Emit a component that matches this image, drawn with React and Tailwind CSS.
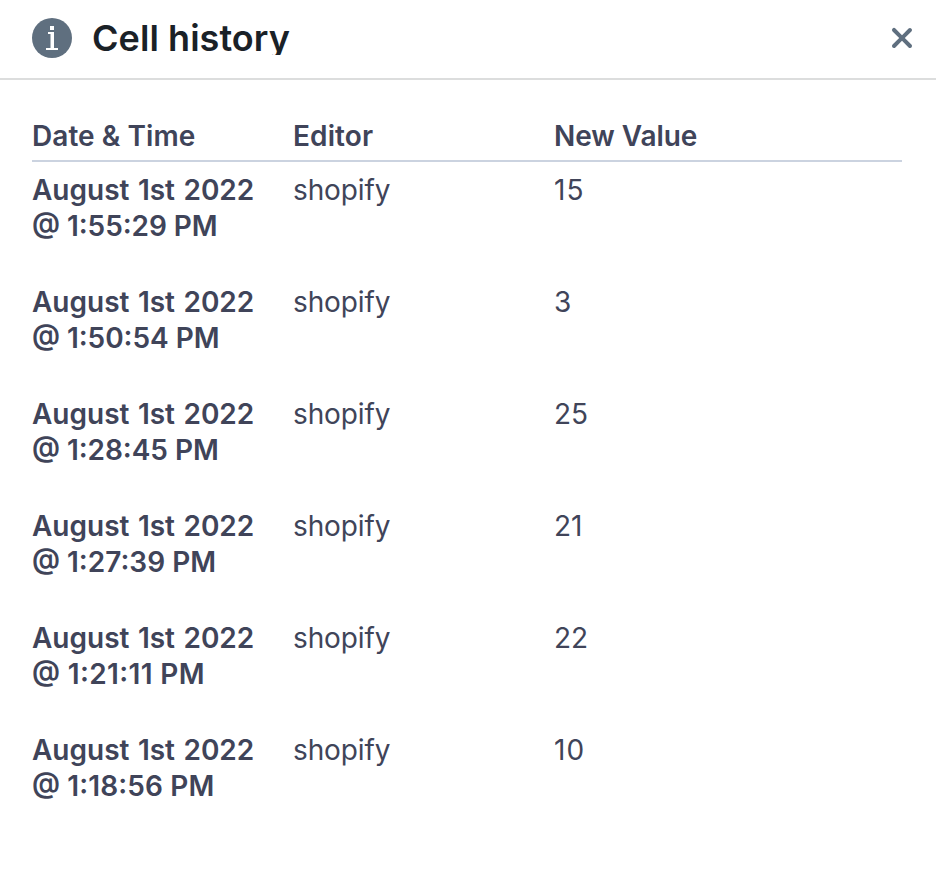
const history = [
  { date: "August 1st 2022", time: "1:55:29 PM", editor: "shopify", value: "15", tracking: "tracking-[-0.05px]" },
  { date: "August 1st 2022", time: "1:50:54 PM", editor: "shopify", value: "3", tracking: "tracking-[-0.05px]" },
  { date: "August 1st 2022", time: "1:28:45 PM", editor: "shopify", value: "25", tracking: "tracking-[-0.05px]" },
  { date: "August 1st 2022", time: "1:27:39 PM", editor: "shopify", value: "21", tracking: "tracking-normal" },
  { date: "August 1st 2022", time: "1:21:11 PM", editor: "shopify", value: "22", tracking: "tracking-[0.35px]" },
  { date: "August 1st 2022", time: "1:18:56 PM", editor: "shopify", value: "10", tracking: "tracking-[0.12px]" },
];

function InfoIcon() {
  return (
    <svg className="h-10 w-10 shrink-0" viewBox="0 0 40 40" aria-hidden="true">
      <circle cx="20" cy="20" r="20" fill="#5f6f7f" />
      <path fill="#fff" d="M18 8h4v4h-4zM16 14h6v16h4v2H14v-2h4.5V16H16z" />
    </svg>
  );
}

function CloseIcon() {
  return (
    <svg className="h-10 w-10" viewBox="0 0 20 20" aria-hidden="true">
      <path
        fill="#5f6f7f"
        d="M11.41 10l3.29-3.29c.19-.18.3-.43.3-.71a1.003 1.003 0 00-1.71-.71L10 8.59l-3.29-3.3a1.003 1.003 0 00-1.42 1.42L8.59 10 5.3 13.29c-.19.18-.3.43-.3.71a1.003 1.003 0 001.71.71l3.29-3.3 3.29 3.29c.18.19.43.3.71.3a1.003 1.003 0 00.71-1.71L11.41 10z"
      />
    </svg>
  );
}

export default function App() {
  return (
    <div className="min-h-screen bg-white font-['Inter',sans-serif] text-[28px] leading-9 text-[#404459]">
      <header className="flex h-20 items-center border-b-2 border-[#dcdddd] pr-3.5 pb-0.5 pl-8">
        <InfoIcon />
        <h4 className="ml-5 flex-1 overflow-hidden text-[36px] leading-[34px] font-semibold tracking-[0.06px] text-[#1a2127]">
          Cell history
        </h4>
        <button type="button" aria-label="Close">
          <CloseIcon />
        </button>
      </header>

      <div className="pt-[38px] pr-[34px] pl-8">
        <div className="grid grid-cols-[30%_30%_40%] border-b-2 border-[#cbd3e0] pb-1.5 font-semibold">
          <div className="tracking-[0.06px]">Date &amp; Time</div>
          <div className="tracking-[0.12px]">Editor</div>
          <div className="tracking-[-0.06px]">New Value</div>
        </div>
        {history.map((row) => (
          <div key={row.time} className="grid h-28 grid-cols-[30%_30%_40%] pt-2.5">
            {/* calt keeps the @ and colons centred on the digits when tracking is set */}
            <div className="font-semibold whitespace-nowrap [font-feature-settings:'calt']">
              <div className="[word-spacing:1.4px]">{row.date}</div>
              <div className={row.tracking}>@ {row.time}</div>
            </div>
            <div className="tracking-[-0.12px]">{row.editor}</div>
            <div className={row.value.startsWith("1") ? "tracking-[1px]" : ""}>{row.value}</div>
          </div>
        ))}
      </div>
    </div>
  );
}
